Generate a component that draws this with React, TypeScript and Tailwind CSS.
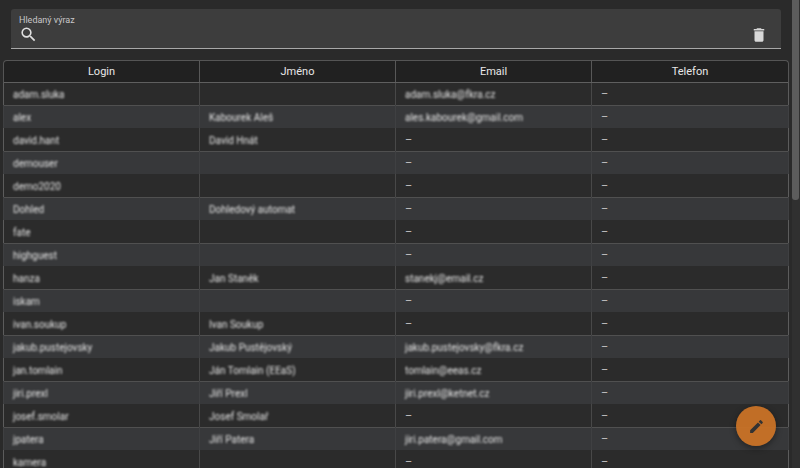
const rows: [string, string, string][] = [
  ["adam.sluka", "", "adam.sluka@fkra.cz"],
  ["alex", "Kabourek Aleš", "ales.kabourek@gmail.com"],
  ["david.hant", "David Hnát", "–"],
  ["demouser", "", "–"],
  ["demo2020", "", "–"],
  ["Dohled", "Dohledový automat", "–"],
  ["fate", "", "–"],
  ["highguest", "", "–"],
  ["hanza", "Jan Staněk", "stanekj@email.cz"],
  ["iskam", "", "–"],
  ["ivan.soukup", "Ivan Soukup", "–"],
  ["jakub.pustejovsky", "Jakub Pustějovský", "jakub.pustejovsky@fkra.cz"],
  ["jan.tomlain", "Ján Tomlain (EEaS)", "tomlain@eeas.cz"],
  ["jiri.prexl", "Jiří Prexl", "jiri.prexl@ketnet.cz"],
  ["josef.smolar", "Josef Smolař", "–"],
  ["jpatera", "Jiří Patera", "jiri.patera@gmail.com"],
  ["kamera", "", "–"],
];

function Cell({ children, odd, sep }: { children?: React.ReactNode; odd: boolean; sep: boolean }) {
  const dash = children === "–";
  return (
    <div className={`flex h-full w-[196px] shrink-0 items-center pt-[1px] ${sep ? "border-r" : ""} ${odd ? "border-[#3f4042]" : "border-[#484848]"}`}>
      <span className={dash ? "px-[9px] text-[11px] text-[#c8c8c8]" : "truncate px-[9px] text-[10px] text-[#e4e4e4] blur-[0.8px]"}>{children}</span>
    </div>
  );
}

export default function App() {
  return (
    <div className="flex h-[468px] w-[800px] overflow-hidden bg-[#2a2a2a] font-['Roboto','Liberation_Sans',sans-serif]">
      <main className="relative w-[792px] shrink-0">
        <div className="px-[11px] pt-[9px]">
          <div className="relative flex h-[40px] items-end justify-between rounded-t-[3px] border-b border-[#a8a8a8] bg-[#3d3d3d] pb-[4px] pl-[8px] pr-[13px]">
            <span className="absolute left-[8px] top-[5px] text-[9px] leading-[12px] text-[#c8c8c8]">Hledaný výraz</span>
            <svg width="19" height="19" viewBox="0 0 24 24" fill="#e0e0e0">
              <path d="M15.5 14h-.79l-.28-.27A6.471 6.471 0 0 0 16 9.5 6.5 6.5 0 1 0 9.5 16c1.61 0 3.09-.59 4.23-1.57l.27.28v.79l5 4.99L20.49 19l-4.99-5zm-6 0C7.01 14 5 11.99 5 9.5S7.01 5 9.5 5 14 7.01 14 9.5 11.99 14 9.5 14z" />
            </svg>
            <svg width="18" height="18" viewBox="0 0 24 24" fill="#d8d8d8">
              <path d="M6 19c0 1.1.9 2 2 2h8c1.1 0 2-.9 2-2V7H6v12zM19 4h-3.5l-1-1h-5l-1 1H5v2h14V4z" />
            </svg>
          </div>
        </div>
        <div className="ml-[3px] mt-[11px] w-[786px]">
          <div className="flex h-[23px] items-center rounded-t-[4px] border border-[#555] border-b-[#5f5f5f] bg-[#212121]">
            {["Login", "Jméno", "Email", "Telefon"].map((h, i) => (
              <div key={h} className={`flex h-full w-[196px] shrink-0 items-center justify-center pt-[1px] text-[11px] text-[#e8e8e8] ${i < 3 ? "border-r border-[#585858]" : ""}`}>
                {h}
              </div>
            ))}
          </div>
          {rows.map((r, i) => {
            const odd = i % 2 === 1;
            return (
              <div
                key={r[0]}
                className={`flex border-x ${i === 0 ? "h-[22px]" : "h-[23px]"} ${
                  odd
                    ? "border-x-[#3f4042] bg-[#37383a] shadow-[inset_0_1px_0_#505050]"
                    : "border-x-[#5c5c5c] bg-[#2b2b2b]"
                }`}
              >
                <Cell odd={odd} sep>{r[0]}</Cell>
                <Cell odd={odd} sep>{r[1]}</Cell>
                <Cell odd={odd} sep>{r[2]}</Cell>
                <Cell odd={odd} sep={false}>–</Cell>
              </div>
            );
          })}
        </div>
        <button className="absolute left-[736px] top-[406px] flex h-[40px] w-[40px] items-center justify-center rounded-full bg-[#c97226]/95 shadow-[0_2px_6px_rgba(0,0,0,0.4)]">
          <svg width="17" height="17" viewBox="0 0 24 24" fill="#333">
            <path d="M3 17.25V21h3.75L17.81 9.94l-3.75-3.75L3 17.25zM20.71 7.04a1 1 0 0 0 0-1.41l-2.34-2.34a1 1 0 0 0-1.41 0l-1.83 1.83 3.75 3.75 1.83-1.83z" />
          </svg>
        </button>
      </main>
      <aside className="h-full w-[8px] shrink-0 bg-[#303030]">
        <div className="h-[200px] w-[7px] rounded-b-[3px] bg-[#5c5c5c]" />
      </aside>
    </div>
  );
}
